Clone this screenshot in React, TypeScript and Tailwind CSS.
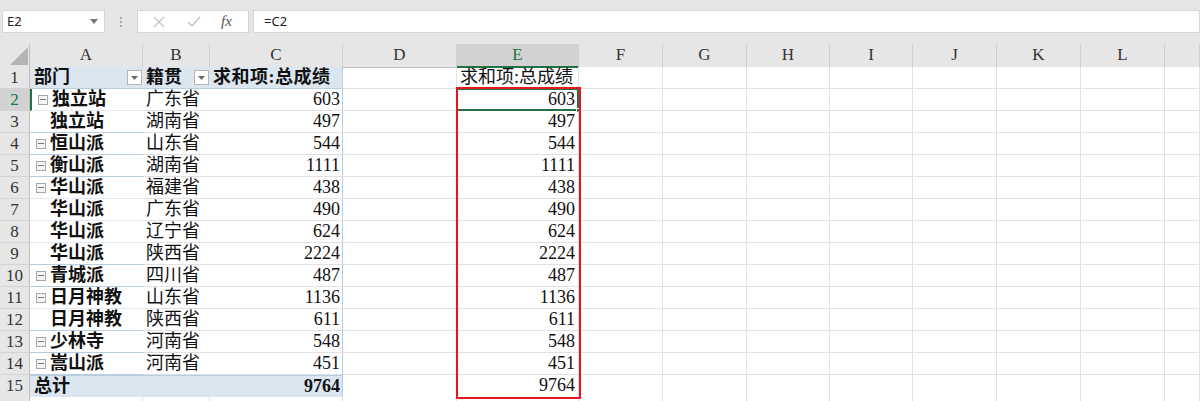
import React from 'react';

const SERIF = '"Liberation Serif", "Noto Sans CJK SC", serif';
const SANS = '"Noto Sans", "Noto Sans CJK SC", sans-serif';

const COLS = ['A', 'B', 'C', 'D', 'E', 'F', 'G', 'H', 'I', 'J', 'K', 'L', ''];
const GRID = 'grid grid-cols-[30px_113px_67px_133px_114px_122px_84px_84px_83px_83px_84px_84px_84px_1fr]';

type Row = { dept: string; parent: boolean; prov: string; score: number; groupEnd: boolean };

const rows: Row[] = [
    { dept: '独立站', parent: true, prov: '广东省', score: 603, groupEnd: false },
    { dept: '独立站', parent: false, prov: '湖南省', score: 497, groupEnd: true },
    { dept: '恒山派', parent: true, prov: '山东省', score: 544, groupEnd: true },
    { dept: '衡山派', parent: true, prov: '湖南省', score: 1111, groupEnd: true },
    { dept: '华山派', parent: true, prov: '福建省', score: 438, groupEnd: false },
    { dept: '华山派', parent: false, prov: '广东省', score: 490, groupEnd: false },
    { dept: '华山派', parent: false, prov: '辽宁省', score: 624, groupEnd: false },
    { dept: '华山派', parent: false, prov: '陕西省', score: 2224, groupEnd: true },
    { dept: '青城派', parent: true, prov: '四川省', score: 487, groupEnd: true },
    { dept: '日月神教', parent: true, prov: '山东省', score: 1136, groupEnd: false },
    { dept: '日月神教', parent: false, prov: '陕西省', score: 611, groupEnd: true },
    { dept: '少林寺', parent: true, prov: '河南省', score: 548, groupEnd: true },
    { dept: '嵩山派', parent: true, prov: '河南省', score: 451, groupEnd: true },
];

function FilterButton() {
    return (
        <span className="w-[15px] h-[15px] bg-white border border-[#b5b5b5] flex items-center justify-center mr-[1px]">
            <svg width="7" height="4" viewBox="0 0 7 4"><polygon points="0,0 7,0 3.5,4" fill="#6b6b6b" /></svg>
        </span>
    );
}

function MinusBox() {
    return (
        <span className="w-[10px] h-[10px] border border-[#a8a8a8] bg-[#f4f4f4] flex items-center justify-center mr-[4px] shrink-0">
            <span className="w-[6px] h-px bg-[#7a7a7a]" />
        </span>
    );
}

function RowHeader({ n, active }: { n: number; active?: boolean }) {
    return (
        <div className={`border-r border-b border-r-[#bfbfbf] border-b-[#d4d4d4] text-center text-[17px] ${active ? 'bg-[#d2d2d2] text-[#217346]' : 'bg-[#e6e6e6] text-[#333]'}`}>
            {n}
        </div>
    );
}

function Blank({ count }: { count: number }) {
    return (
        <>
            {Array.from({ length: count }).map((_, i) => (
                <div key={i} className="border-r border-b border-[#e1e1e1] bg-white" />
            ))}
        </>
    );
}

export default function App() {
    return (
        <div className="w-[1200px] h-[401px] overflow-hidden bg-white text-[#111]" style={{ fontFamily: SERIF }}>
            {/* formula bar */}
            <div className="h-[44px] bg-[#e6e6e6] flex items-start pt-[10px] pl-[2px]" style={{ fontFamily: SANS }}>
                <div className="w-[103px] h-[23px] bg-white border border-[#d6d6d6] flex items-center justify-between px-[4px] text-[13px] text-[#222]">
                    <span>E2</span>
                    <svg width="8" height="5" viewBox="0 0 8 5" className="mr-[2px]"><polygon points="0,0 8,0 4,5" fill="#777" /></svg>
                </div>
                <div className="w-[32px] h-[23px] flex flex-col items-center justify-center gap-[2px]">
                    <span className="w-[2px] h-[2px] bg-[#aaa]" />
                    <span className="w-[2px] h-[2px] bg-[#aaa]" />
                    <span className="w-[2px] h-[2px] bg-[#aaa]" />
                </div>
                <div className="w-[112px] h-[23px] bg-white border border-[#d6d6d6] flex items-center">
                    <svg width="12" height="12" viewBox="0 0 12 12" className="ml-[15px]"><path d="M1 1 L11 11 M11 1 L1 11" stroke="#c4c4c4" strokeWidth="1.3" /></svg>
                    <svg width="14" height="12" viewBox="0 0 14 12" className="ml-[22px]"><path d="M1 6 L5 10 L13 1" stroke="#c4c4c4" strokeWidth="1.5" fill="none" /></svg>
                    <span className="ml-[20px] text-[15px] italic text-[#555]" style={{ fontFamily: SERIF }}>fx</span>
                </div>
                <div className="flex-1 h-[23px] ml-[4px] bg-white border border-[#d6d6d6] flex items-center pl-[10px] text-[13px] text-[#222]">=C2</div>
            </div>

            {/* column headers */}
            <div className={`${GRID} h-[23px] bg-[#e6e6e6]`}>
                <div className="border-r border-b border-r-[#bfbfbf] border-b-[#bfbfbf] relative">
                    <svg width="18" height="18" viewBox="0 0 18 18" className="absolute left-[10px] top-[3px]"><polygon points="18,0 18,18 0,18" fill="#b4b4b4" /></svg>
                </div>
                {COLS.map((c, i) => (
                    <div
                        key={i}
                        className={`border-r border-r-[#cfcfcf] text-center text-[17px] leading-[22px] ${c === 'E' ? 'bg-[#d2d2d2] text-[#217346] border-b-2 border-b-[#217346]' : 'text-[#333] border-b border-b-[#bfbfbf]'}`}
                    >
                        {c}
                    </div>
                ))}
            </div>

            {/* sheet body */}
            <div className="relative text-[18px] leading-[21px]">
                {/* row 1 */}
                <div className={`${GRID} h-[22px]`}>
                    <RowHeader n={1} />
                    <div className="bg-[#dce6f1] border-b border-[#b8cce4] flex items-center justify-between pl-[4px] font-semibold">
                        <span>部门</span>
                        <FilterButton />
                    </div>
                    <div className="bg-[#dce6f1] border-b border-[#b8cce4] flex items-center justify-between pl-[3px] font-semibold">
                        <span>籍贯</span>
                        <FilterButton />
                    </div>
                    <div className="bg-[#dce6f1] border-b border-r border-[#b8cce4] pl-[3px] font-semibold whitespace-nowrap tracking-[0.5px]">求和项:总成绩</div>
                    <div className="border-r border-b border-[#e1e1e1]" />
                    <div className="border-r border-b border-[#e1e1e1] pl-[3px] whitespace-nowrap overflow-visible">求和项:总成绩</div>
                    <Blank count={8} />
                </div>

                {rows.map((r, i) => (
                    <div key={i} className={`${GRID} h-[22px]`}>
                        <RowHeader n={i + 2} active={i === 0} />
                        <div className={`border-b ${r.groupEnd ? 'border-[#b8cce4]' : 'border-[#e4ebf5]'} flex items-center pl-[6px] font-semibold whitespace-nowrap ${i === 0 ? 'border-l-2 border-l-[#217346] pl-[4px]' : ''}`}>
                            {r.parent ? <MinusBox /> : <span className="w-[14px] shrink-0" />}
                            <span>{r.dept}</span>
                        </div>
                        <div className="border-b border-[#e1e1e1] pl-[3px]">{r.prov}</div>
                        <div className="border-b border-r border-[#e1e1e1] border-r-[#b8cce4] text-right pr-[2px]">{r.score}</div>
                        <div className="border-r border-b border-[#e1e1e1]" />
                        <div className="relative border-r border-b border-[#e1e1e1] text-right pr-[3px]">
                            {r.score}
                            {i === 0 && (
                                <>
                                    <div className="absolute inset-[-1px] border-2 border-[#217346]" />
                                    <div className="absolute right-[-3px] bottom-[-3px] w-[5px] h-[5px] bg-[#217346] border border-white" />
                                </>
                            )}
                        </div>
                        <Blank count={8} />
                    </div>
                ))}

                {/* row 15 total */}
                <div className={`${GRID} h-[22px]`}>
                    <RowHeader n={15} />
                    <div className="bg-[#dce6f1] border-t border-b border-[#b8cce4] pl-[4px] font-semibold col-span-2">总计</div>
                    <div className="bg-[#dce6f1] border-t border-b border-r border-[#b8cce4] text-right pr-[2px] font-bold">9764</div>
                    <div className="border-r border-b border-[#e1e1e1]" />
                    <div className="border-r border-b border-[#e1e1e1] text-right pr-[3px]">9764</div>
                    <Blank count={8} />
                </div>

                {/* row 16 sliver */}
                <div className={`${GRID} h-[22px]`}>
                    <div className="bg-[#e6e6e6] border-r border-[#bfbfbf]" />
                    <Blank count={13} />
                </div>

                {/* red highlight box */}
                <div className="absolute left-[456px] top-[20px] w-[125px] h-[312px] border-2 border-[#e8141e] pointer-events-none" />
            </div>
        </div>
    );
}
